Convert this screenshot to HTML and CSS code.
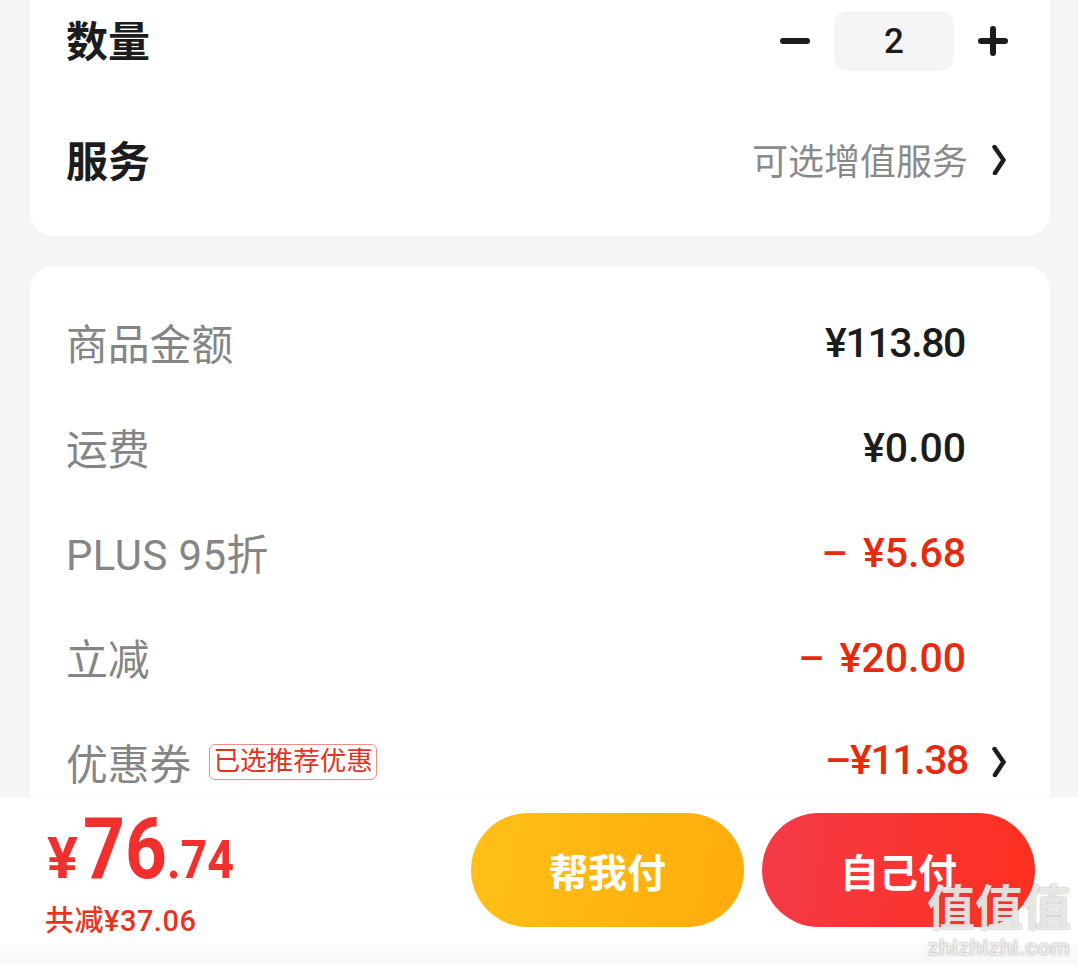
FILE: index.html
```html
<!DOCTYPE html>
<html lang="zh">
<head>
<meta charset="utf-8">
<title>确认订单</title>
<link rel="stylesheet" href="styles.css">
</head>
<body>
<div class="page">
  <main class="content">
    <section class="card card-top">
      <div class="row row-qty">
        <span class="title">数量</span>
        <div class="stepper">
          <svg class="step-icon" width="30" height="30" viewBox="0 0 30 30"><path d="M3 15h24" /></svg>
          <span class="qty">2</span>
          <svg class="step-icon" width="30" height="30" viewBox="0 0 30 30"><path d="M3 15h24M15 3v24" /></svg>
        </div>
      </div>
      <div class="row row-service">
        <span class="title">服务</span>
        <div class="service-link">
          <span class="hint">可选增值服务</span>
          <svg class="chevron" width="14" height="30" viewBox="0 0 14 30"><path d="M2.500 2L11.500 15L3 28" /></svg>
        </div>
      </div>
    </section>
    <section class="card card-price">
      <div class="line"><span class="label">商品金额</span><span class="amount tight">¥113.80</span></div>
      <div class="line"><span class="label">运费</span><span class="amount">¥0.00</span></div>
      <div class="line"><span class="label label-latin">PLUS 95折</span><span class="amount red"><span class="minus">–</span>¥5.68</span></div>
      <div class="line"><span class="label">立减</span><span class="amount red"><span class="minus">–</span>¥20.00</span></div>
      <div class="line line-coupon">
        <span class="label">优惠券</span>
        <span class="tag">已选推荐优惠</span>
        <span class="amount red coupon tight">–¥11.38</span>
        <svg class="chevron" width="14" height="30" viewBox="0 0 14 30"><path d="M2.500 2L11.500 15L3 28" /></svg>
      </div>
    </section>
  </main>
  <footer class="paybar">
    <div class="total">
      <div class="price"><span class="yen">¥</span><span class="int">76</span><span class="dec">.74</span></div>
      <div class="saved">共减¥37.06</div>
    </div>
    <div class="actions">
      <button class="btn btn-help">帮我付</button>
      <button class="btn btn-self">自己付</button>
    </div>
  </footer>
  <div class="strip"></div>
  <div class="watermark">
    <span class="wm-mark">值值值</span>
    <span class="wm-url">zhizhizhi.com</span>
  </div>
</div>
</body>
</html>
```
FILE: styles.css
```css
* { box-sizing: border-box; }
html, body { margin: 0; padding: 0; }
body {
  font-family: Roboto, "Noto Sans CJK SC", sans-serif;
  background: #f5f5f5;
  color: #1c1c1c;
}
.page {
  position: relative;
  width: 1078px;
  height: 965px;
  overflow: hidden;
  display: flex;
  flex-direction: column;
}
.content {
  height: 796px;
  flex: none;
  overflow: hidden;
  padding: 0 28px 0 30px;
  display: flex;
  flex-direction: column;
  gap: 30px;
}
.card { background: #fff; flex: none; }
.card-top {
  height: 236px;
  border-radius: 0 0 24px 24px;
  padding: 0 44px 0 36px;
}
.card-price {
  border-radius: 24px 24px 0 0;
  padding: 26px 44px 0 36px;
}
.row { display: flex; align-items: center; justify-content: space-between; }
.row-qty { height: 84px; }
.row-service { height: 158px; }
.title { font-size: 42px; line-height: 1; font-weight: 700; color: #1c1c1c; }
.row-qty .title { margin-top: 2px; }
.stepper { display: flex; align-items: center; gap: 24px; margin: -2px -2px 0 0; }
.step-icon { fill: none; stroke: #1c1c1c; stroke-width: 6; stroke-linecap: round; }
.qty {
  width: 120px;
  height: 60px;
  border-radius: 14px;
  background: #f5f5f5;
  display: flex;
  align-items: center;
  justify-content: center;
  font-size: 35px;
  font-weight: 500;
}
.service-link { display: flex; align-items: center; gap: 24px; }
.service-link .chevron { margin-bottom: 6px; }
.hint { font-size: 36px; line-height: 1; color: #8a8a8a; }
.chevron { flex: none; fill: none; stroke: #1c1c1c; stroke-width: 4.500; stroke-linecap: round; stroke-linejoin: miter; }
.line { height: 105px; display: flex; align-items: center; }
.label { font-size: 41.800px; line-height: 1; color: #858585; margin-top: 2px; }
.label-latin { letter-spacing: 0.500px; }
.amount {
  margin-left: auto;
  margin-right: 40px;
  margin-bottom: 3px;
  font-size: 41px;
  line-height: 1;
  font-weight: 500;
  color: #1c1c1c;
}
.tight { letter-spacing: -1.400px; margin-right: 41px; }
.red { color: #e72a0d; }
.minus { margin-right: 15px; }
.coupon { margin-right: 24px; margin-bottom: 8px; }
.line-coupon .chevron { margin-bottom: 6px; }
.tag {
  margin: 0 0 6px 18px;
  padding: 0 3px;
  height: 36px;
  display: flex;
  align-items: center;
  border: 1px solid #ee8f84;
  border-radius: 6px;
  font-size: 26.600px;
  line-height: 1;
  color: #e2331f;
}
.paybar {
  flex: none;
  height: 149px;
  background: #fff;
  border-top: 1px solid #f3f3f3;
  padding: 12px 43px 0 46px;
  display: flex;
  justify-content: space-between;
  align-items: flex-start;
}
.price { display: flex; align-items: baseline; color: #f0302f; font-weight: 700; height: 80px; line-height: 80px; }
.yen { font-size: 58px; margin: 0 5px 0 1px; }
.int, .dec { display: inline-block; transform-origin: left center; }
.int { font-size: 85px; transform: scaleX(0.86); margin-right: -14px; }
.dec { font-size: 53px; transform: scaleX(0.88); }
.saved { margin: 16px 0 0 -1px; font-size: 29px; line-height: 32px; letter-spacing: 0.500px; color: #e8341f; font-weight: 500; }
.actions { display: flex; gap: 18px; margin-top: 4px; }
.btn {
  width: 273px;
  height: 114px;
  border: 0;
  border-radius: 57px;
  color: #fff;
  font-family: inherit;
  font-size: 39px;
  font-weight: 700;
}
.btn-help { background: linear-gradient(100deg, #ffc017, #ffab0c); }
.btn-self { background: linear-gradient(100deg, #f33b48, #ff2f1f); }
.strip { flex: 1; background: #f9f9f9; }
.watermark {
  position: absolute;
  left: 926px;
  top: 885px;
  width: 146px;
  color: rgba(255, 255, 255, 0.8);
  text-shadow: 0 0 2px rgba(110, 110, 110, 0.8);
  display: flex;
  flex-direction: column;
  align-items: center;
  gap: 4px;
}
.wm-mark { font-size: 48px; line-height: 48px; font-weight: 700; white-space: nowrap; }
.wm-url { font-size: 22px; line-height: 22px; letter-spacing: 0.500px; font-weight: 500; white-space: nowrap; }
```
